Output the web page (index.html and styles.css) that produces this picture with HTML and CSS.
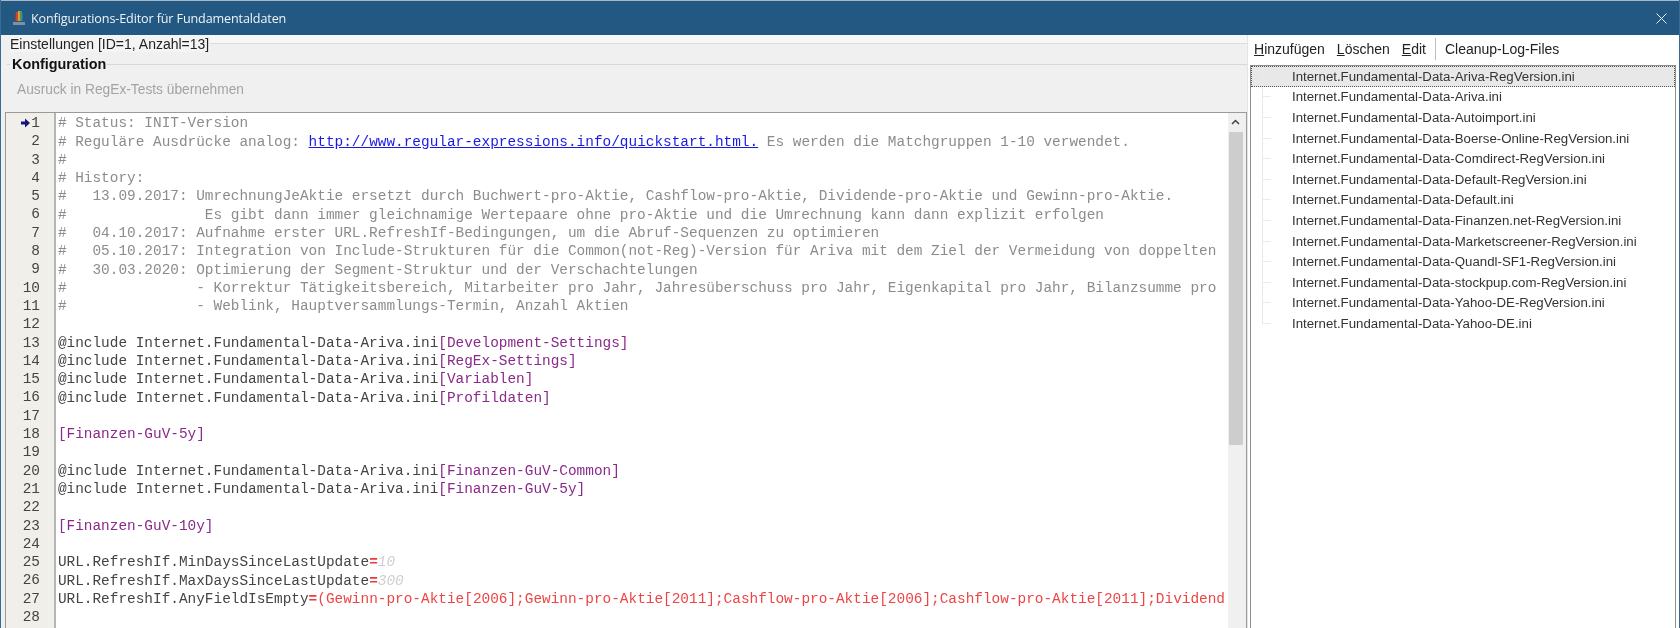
FILE: index.html
```html
<!DOCTYPE html>
<html lang="de">
<head>
<meta charset="utf-8">
<title>Konfigurations-Editor für Fundamentaldaten</title>
<link rel="stylesheet" href="styles.css">
</head>
<body>
<div class="window">
  <header class="titlebar">
    <svg class="app-icon" width="12" height="15" viewBox="0 0 12 15">
      <rect x="2" y="3" width="1" height="7" fill="#a0392b"/>
      <rect x="3" y="1" width="2" height="9" fill="#d0452f"/>
      <rect x="5" y="0" width="2" height="10" fill="#c8a83a"/>
      <rect x="7" y="0" width="2" height="10" fill="#3f9a5d"/>
      <rect x="9" y="2" width="1" height="8" fill="#2f6fa8"/>
      <rect x="0" y="11" width="12" height="3" fill="#7f90a2"/>
    </svg>
    <span class="title">Konfigurations-Editor für Fundamentaldaten</span>
    <svg class="close" width="11" height="11" viewBox="0 0 11 11">
      <path d="M0.5 0.5 L10.5 10.5 M10.5 0.5 L0.5 10.5" stroke="#e8eef3" stroke-width="1" fill="none"/>
    </svg>
  </header>
  <div class="body">
    <section class="left">
      <div class="settings-legend"><span>Einstellungen [ID=1, Anzahl=13]</span></div>
      <div class="config-legend"><span>Konfiguration</span></div>
      <div class="action">Ausruck in RegEx-Tests übernehmen</div>
      <div class="editor">
        <div class="gutter">
          <div class="num"><svg class="marker" width="9" height="10" viewBox="0 0 9 10"><path d="M0 3.5 H4 V0.5 L9 5 L4 9.5 V6.5 H0 Z" fill="#14147a"/></svg>1</div>
          <div class="num">2</div><div class="num">3</div><div class="num">4</div><div class="num">5</div>
          <div class="num">6</div><div class="num">7</div><div class="num">8</div><div class="num">9</div>
          <div class="num">10</div><div class="num">11</div><div class="num">12</div><div class="num">13</div>
          <div class="num">14</div><div class="num">15</div><div class="num">16</div><div class="num">17</div>
          <div class="num">18</div><div class="num">19</div><div class="num">20</div><div class="num">21</div>
          <div class="num">22</div><div class="num">23</div><div class="num">24</div><div class="num">25</div>
          <div class="num">26</div><div class="num">27</div><div class="num">28</div>
        </div>
        <div class="code">
          <div class="ln c"># Status: INIT-Version</div>
          <div class="ln c"># Reguläre Ausdrücke analog: <a class="link">http://www.regular-expressions.info/quickstart.html.</a> Es werden die Matchgruppen 1-10 verwendet.</div>
          <div class="ln c">#</div>
          <div class="ln c"># History:</div>
          <div class="ln c">#   13.09.2017: UmrechnungJeAktie ersetzt durch Buchwert-pro-Aktie, Cashflow-pro-Aktie, Dividende-pro-Aktie und Gewinn-pro-Aktie.</div>
          <div class="ln c">#                Es gibt dann immer gleichnamige Wertepaare ohne pro-Aktie und die Umrechnung kann dann explizit erfolgen</div>
          <div class="ln c">#   04.10.2017: Aufnahme erster URL.RefreshIf-Bedingungen, um die Abruf-Sequenzen zu optimieren</div>
          <div class="ln c">#   05.10.2017: Integration von Include-Strukturen für die Common(not-Reg)-Version für Ariva mit dem Ziel der Vermeidung von doppelten</div>
          <div class="ln c">#   30.03.2020: Optimierung der Segment-Struktur und der Verschachtelungen</div>
          <div class="ln c">#               - Korrektur Tätigkeitsbereich, Mitarbeiter pro Jahr, Jahresüberschuss pro Jahr, Eigenkapital pro Jahr, Bilanzsumme pro</div>
          <div class="ln c">#               - Weblink, Hauptversammlungs-Termin, Anzahl Aktien</div>
          <div class="ln"></div>
          <div class="ln">@include Internet.Fundamental-Data-Ariva.ini<span class="sec">[Development-Settings]</span></div>
          <div class="ln">@include Internet.Fundamental-Data-Ariva.ini<span class="sec">[RegEx-Settings]</span></div>
          <div class="ln">@include Internet.Fundamental-Data-Ariva.ini<span class="sec">[Variablen]</span></div>
          <div class="ln">@include Internet.Fundamental-Data-Ariva.ini<span class="sec">[Profildaten]</span></div>
          <div class="ln"></div>
          <div class="ln"><span class="sec">[Finanzen-GuV-5y]</span></div>
          <div class="ln"></div>
          <div class="ln">@include Internet.Fundamental-Data-Ariva.ini<span class="sec">[Finanzen-GuV-Common]</span></div>
          <div class="ln">@include Internet.Fundamental-Data-Ariva.ini<span class="sec">[Finanzen-GuV-5y]</span></div>
          <div class="ln"></div>
          <div class="ln"><span class="sec">[Finanzen-GuV-10y]</span></div>
          <div class="ln"></div>
          <div class="ln">URL.RefreshIf.MinDaysSinceLastUpdate<span class="eq">=</span><span class="numval">10</span></div>
          <div class="ln">URL.RefreshIf.MaxDaysSinceLastUpdate<span class="eq">=</span><span class="numval">300</span></div>
          <div class="ln">URL.RefreshIf.AnyFieldIsEmpty<span class="eq">=</span><span class="val">(Gewinn-pro-Aktie[2006];Gewinn-pro-Aktie[2011];Cashflow-pro-Aktie[2006];Cashflow-pro-Aktie[2011];Dividend</span></div>
          <div class="ln"></div>
        </div>
        <div class="scrollbar">
          <svg class="arrow" width="9" height="6" viewBox="0 0 9 6"><path d="M1 5 L4.5 1.5 L8 5" stroke="#444" stroke-width="1.5" fill="none"/></svg>
          <div class="thumb"></div>
        </div>
      </div>
    </section>
    <aside class="right">
      <nav class="toolbar">
        <span class="tool"><u>H</u>inzufügen</span>
        <span class="tool"><u>L</u>öschen</span>
        <span class="tool"><u>E</u>dit</span>
        <span class="sep"></span>
        <span class="tool">Cleanup-Log-Files</span>
      </nav>
      <div class="tree">
        <div class="row selected"><span class="stub"></span>Internet.Fundamental-Data-Ariva-RegVersion.ini</div>
        <div class="row"><span class="stub"></span>Internet.Fundamental-Data-Ariva.ini</div>
        <div class="row"><span class="stub"></span>Internet.Fundamental-Data-Autoimport.ini</div>
        <div class="row"><span class="stub"></span>Internet.Fundamental-Data-Boerse-Online-RegVersion.ini</div>
        <div class="row"><span class="stub"></span>Internet.Fundamental-Data-Comdirect-RegVersion.ini</div>
        <div class="row"><span class="stub"></span>Internet.Fundamental-Data-Default-RegVersion.ini</div>
        <div class="row"><span class="stub"></span>Internet.Fundamental-Data-Default.ini</div>
        <div class="row"><span class="stub"></span>Internet.Fundamental-Data-Finanzen.net-RegVersion.ini</div>
        <div class="row"><span class="stub"></span>Internet.Fundamental-Data-Marketscreener-RegVersion.ini</div>
        <div class="row"><span class="stub"></span>Internet.Fundamental-Data-Quandl-SF1-RegVersion.ini</div>
        <div class="row"><span class="stub"></span>Internet.Fundamental-Data-stockpup.com-RegVersion.ini</div>
        <div class="row"><span class="stub"></span>Internet.Fundamental-Data-Yahoo-DE-RegVersion.ini</div>
        <div class="row last"><span class="stub"></span>Internet.Fundamental-Data-Yahoo-DE.ini</div>
      </div>
    </aside>
  </div>
</div>
</body>
</html>
```
FILE: styles.css
```css
* { box-sizing: border-box; }
html, body { margin: 0; padding: 0; height: 100%; overflow: hidden; }
body { font-family: "Liberation Sans", Arial, sans-serif; color: #222; background: #f0f0f0; }
.window { height: 628px; display: flex; flex-direction: column; border-left: 1px solid #3b6a92; border-right: 1px solid #3b6a92; overflow: hidden; filter: blur(0.35px); }
.titlebar { flex: none; height: 35px; margin-left: -1px; margin-right: -1px; border-top: 1px solid #a9b8c4; background: #225882; display: flex; align-items: center; padding: 0 13px; color: #eef3f7; }
.app-icon { flex: none; margin-right: 6px; }
.title { font-family: "Open Sans", "Liberation Sans", sans-serif; font-size: 12.6px; letter-spacing: -0.13px; flex: 1; }
.close { flex: none; }
.body { flex: 1; min-height: 0; display: flex; background: #fff; }
.left { width: 1247px; flex: none; background: #f0f0f0; display: flex; flex-direction: column; padding-left: 4px; border-right: 1px solid #e4e4e4; }
.settings-legend { height: 19px; padding-bottom: 2px; display: flex; align-items: center; font-size: 14px; margin-left: 5px; color: #222; background: linear-gradient(#f7f7f7 8px, #dcdcdc 8px, #dcdcdc 9px, #f0f0f0 9px); }
.settings-legend span { background: #f4f4f4; padding-right: 1px; }
.config-legend { height: 20px; display: flex; align-items: center; font-size: 14.4px; font-weight: bold; color: #111; background: linear-gradient(#f0f0f0 10px, #d8d8d8 10px, #d8d8d8 11px, #f0f0f0 11px); margin-left: 2px; }
.config-legend span { background: #f0f0f0; padding: 0 1px 0 2px; margin-left: 3px; }
.action { height: 38px; flex: none; display: flex; align-items: center; padding: 0 0 8px 12px; font-size: 13.75px; color: #a3a3a3; }
.editor { flex: 1; min-height: 0; display: flex; border: 1px solid #9a9a9a; border-bottom: 0; background: #fff; overflow: hidden; font-family: "Liberation Mono", "Courier New", monospace; font-size: 14.42px; line-height: 18.3px; }
.gutter { flex: none; width: 50px; background: #f1efe9; border-right: 2px solid #b5b5b5; padding: 1px 14px 0 0; color: #444; text-align: right; }
.num { height: 18.3px; display: flex; justify-content: flex-end; align-items: center; gap: 1px; }
.marker { flex: none; }
.code { flex: 1; min-width: 0; padding: 1.3px 0 0 1.9px; overflow: hidden; color: #444; }
.ln { height: 18.3px; white-space: pre; }
.c { color: #8c8c8c; }
.link { color: #1a1ae6; text-decoration: underline; }
.sec { color: #8a2a8a; }
.eq { color: #ee3a3a; font-weight: bold; }
.val { color: #ee4444; }
.numval { color: #cfcfcf; font-style: italic; }
.scrollbar { flex: none; width: 19px; background: #f0f0f0; border-left: 1px solid #fff; display: flex; flex-direction: column; align-items: center; padding-top: 6px; }
.arrow { flex: none; margin: 0 3px 7px 0; }
.thumb { width: 14px; height: 313px; background: #cdcdcd; margin-right: 3px; }
.right { flex: 1; min-width: 0; display: flex; flex-direction: column; background: #fff; padding-left: 2px; }
.toolbar { height: 30px; flex: none; display: flex; align-items: center; font-size: 14px; padding: 0 0 2px 4px; color: #222; background: #fff; }
.tool { margin-right: 12px; }
.sep { width: 1px; height: 22px; background: #bdbdbd; margin-right: 9px; margin-left: -3px; }
.tree { flex: 1; min-height: 0; border: 1px solid #8e8e8e; border-bottom: 0; background: #fff; font-size: 13.25px; color: #333; margin-right: 3px; }
.row { height: 20.6px; display: flex; align-items: center; padding-left: 11px; }
.stub { flex: none; width: 30px; height: 100%; background: linear-gradient(#eaeaea, #eaeaea) 0 50% / 9px 1px no-repeat, linear-gradient(#eaeaea, #eaeaea) 0 0 / 1px 100% no-repeat; }
.row.last .stub { background: linear-gradient(#eaeaea, #eaeaea) 0 50% / 9px 1px no-repeat, linear-gradient(#eaeaea, #eaeaea) 0 0 / 1px 50% no-repeat; }
.selected { background: #e8e8e8; outline: 1px dotted #555; outline-offset: -1px; }
```
